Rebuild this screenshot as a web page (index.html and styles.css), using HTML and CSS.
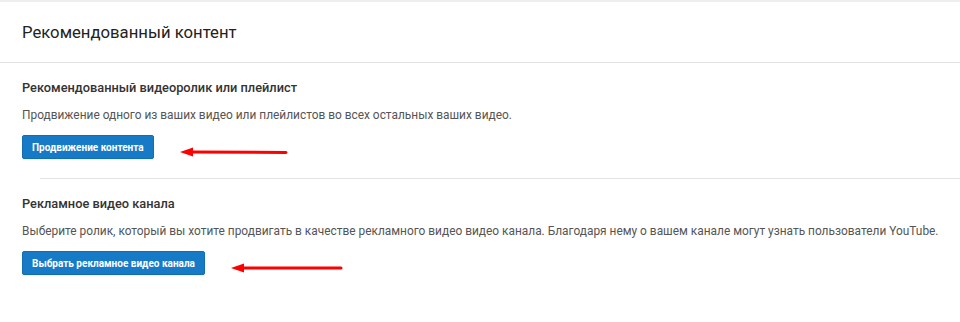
FILE: index.html
```html
<!DOCTYPE html>
<html lang="ru">
<head>
<meta charset="utf-8">
<link rel="stylesheet" href="styles.css">
</head>
<body>
<div class="topbar"></div>
<div class="header">Рекомендованный контент</div>
<section class="section">
  <h3 class="sec-title">Рекомендованный видеоролик или плейлист</h3>
  <p class="sec-desc">Продвижение одного из ваших видео или плейлистов во всех остальных ваших видео.</p>
  <div class="action">
    <button class="btn">Продвижение контента</button>
    <svg class="arrow" width="108" height="10" viewBox="0 0 108 10"><path d="M12 5 L106 5.5" stroke="#f00" stroke-width="3" stroke-linecap="round"/><path d="M0 5 L13 0.5 L13 9.5 Z" fill="#f00"/></svg>
  </div>
</section>
<div class="divider"></div>
<section class="section">
  <h3 class="sec-title">Рекламное видео канала</h3>
  <p class="sec-desc">Выберите ролик, который вы хотите продвигать в качестве рекламного видео видео канала. Благодаря нему о вашем канале могут узнать пользователи YouTube.</p>
  <div class="action">
    <button class="btn">Выбрать рекламное видео канала</button>
    <svg class="arrow" width="112" height="10" viewBox="0 0 112 10"><path d="M12 5 L110 5" stroke="#f00" stroke-width="3" stroke-linecap="round"/><path d="M0 5 L13 0.5 L13 9.5 Z" fill="#f00"/></svg>
  </div>
</section>
</body>
</html>
```
FILE: styles.css
```css
html, body {
  margin: 0;
  padding: 0;
  background: #fff;
  font-family: Roboto, "Noto Sans", Arial, sans-serif;
}
.topbar {
  height: 2px;
  background: #eeeeee;
}
.header {
  height: 60px;
  display: flex;
  align-items: center;
  padding: 0 22px;
  font-size: 16.7px;
  color: #222;
  border-bottom: 1px solid #e2e2e2;
}
.section {
  padding: 16px 10px 19px 22px;
}
.sec-title {
  margin: 0;
  font-size: 12.8px;
  line-height: 17px;
  font-weight: 500;
  color: #333;
}
.sec-desc {
  margin: 11px 0 11px;
  font-size: 11.9px;
  line-height: 17px;
  color: #555;
  white-space: nowrap;
}
.action {
  display: flex;
  align-items: center;
  gap: 26px;
}
.btn {
  height: 24px;
  padding: 0 9px;
  border: 1px solid #126db3;
  border-radius: 2px;
  background: #167ac6;
  color: #fff;
  font-family: Roboto, Arial, sans-serif;
  font-size: 10px;
  font-weight: 700;
  box-shadow: 0 1px 0 rgba(0,0,0,0.05);
}
.arrow {
  display: block;
  margin-top: 10px;
}
.divider {
  height: 1px;
  margin-left: 40px;
  background: #e2e2e2;
}
```
